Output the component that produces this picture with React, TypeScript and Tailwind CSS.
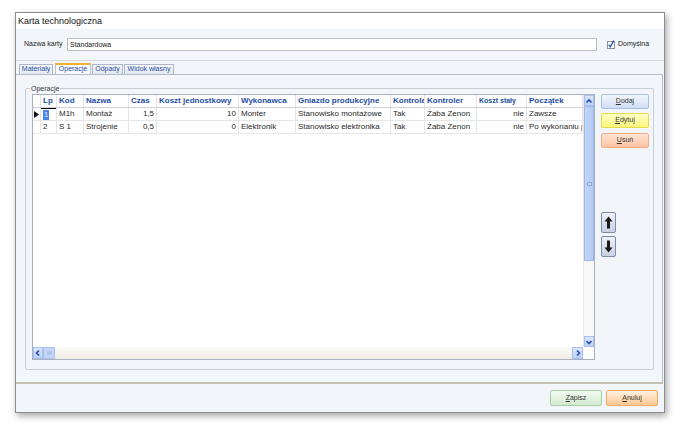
import React from "react";

const COLS = "grid grid-cols-[8px_16px_27px_45px_28px_82px_57px_95px_34px_52px_50px_56px]";

function Chevron({ dir }: { dir: "up" | "down" | "left" | "right" }) {
  const pts: Record<string, string> = {
    up: "1.5,5.5 4,3 6.5,5.5",
    down: "1.5,3 4,5.5 6.5,3",
    left: "5,1.5 2.5,4 5,6.5",
    right: "3,1.5 5.5,4 3,6.5",
  };
  return (
    <svg width="8" height="8" viewBox="0 0 8 8">
      <polyline points={pts[dir]} fill="none" stroke="#1f4fb3" strokeWidth="1.6" />
    </svg>
  );
}

function Arrow({ down }: { down?: boolean }) {
  return (
    <svg width="9" height="13" viewBox="0 0 9 13" className={down ? "rotate-180" : ""}>
      <polygon points="4.5,0.5 8.5,5.5 6,5.5 6,12.5 3,12.5 3,5.5 0.5,5.5" fill="#1a1a1a" />
    </svg>
  );
}

type Row = string[];
const rows: Row[] = [
  ["1", "M1h", "Montaż", "1,5", "10", "Monter", "Stanowisko montażowe", "Tak", "Żaba Zenon", "nie", "Zawsze"],
  ["2", "S 1", "Strojenie", "0,5", "0", "Elektronik", "Stanowisko elektronika", "Tak", "Żaba Zenon", "nie", "Po wykonaniu poprzedniej"],
];

const headers = ["Lp", "Kod", "Nazwa", "Czas", "Koszt jednostkowy", "Wykonawca", "Gniazdo produkcyjne", "Kontrola", "Kontroler", "Koszt stały", "Początek"];
const rightAligned = [3, 4, 9];

export default function App() {
  return (
    <div className="w-[680px] h-[431px] bg-white pt-[12px] pl-[15px] font-['Liberation_Sans',Arial,sans-serif] text-[#222]">
      <div className="w-[650px] h-[401px] border border-[#8c8c8c] bg-[#f2f5fa] flex flex-col shadow-[2px_3px_7px_rgba(0,0,0,0.35)]">
        {/* title */}
        <div className="h-[16px] bg-white text-[9px] leading-[16px] pl-[2px] text-[#111]">Karta technologiczna</div>

        {/* name row */}
        <div className="h-[32px] flex items-center pl-[8px] border-b border-[#d3d7de]">
          <div className="w-[43px] text-[7px] whitespace-nowrap">Nazwa karty</div>
          <div className="w-[530px] h-[13px] bg-white border border-[#b9bdc4] text-[7px] leading-[11px] pl-[2px]">Standardowa</div>
          <div className="ml-[10px] flex items-center gap-[3px]">
            <svg width="8" height="9" viewBox="0 0 8 9">
              <rect x="0.5" y="1.5" width="7" height="7" fill="#fff" stroke="#8e8f94" />
              <polyline points="1.8,4.6 3.3,6.8 6.8,0.6" fill="none" stroke="#2b4fae" strokeWidth="1.3" />
            </svg>
            <span className="text-[7px]">Domyślna</span>
          </div>
        </div>

        {/* tabs */}
        <div className="h-[13px] flex items-end pl-[3px] gap-[1px] text-[7px] text-[#2a4f9f]">
          <div className="w-[34px] h-[10px] border border-b-0 border-[#aeb7c4] bg-gradient-to-b from-[#f6f8fb] to-[#e2e7ef] flex items-center justify-center mr-[1px]">Materiały</div>
          <div className="w-[36px] h-[11px] border border-b-0 border-[#b9c2ce] border-t-2 border-t-[#f0b030] bg-[#f8fafd] flex items-center justify-center">Operacje</div>
          <div className="w-[31px] h-[10px] border border-b-0 border-[#aeb7c4] bg-gradient-to-b from-[#f6f8fb] to-[#e2e7ef] flex items-center justify-center">Odpady</div>
          <div className="w-[50px] h-[10px] border border-b-0 border-[#aeb7c4] bg-gradient-to-b from-[#f6f8fb] to-[#e2e7ef] flex items-center justify-center">Widok własny</div>
        </div>

        {/* tab page */}
        <div className="h-[310px] mr-[1px] border-t border-r border-[#b5bdc9] border-b-2 border-b-[#c4c0b4] flex flex-col">
          <div className="relative mt-[13px] ml-[9px] mr-[8px] h-[282px] border border-[#c8ced8] rounded-[2px] pt-[5px] pl-[6px] pr-[3px] flex gap-[6px]">
            <span className="absolute left-[4px] top-[-5px] px-[1px] bg-[#f2f5fa] text-[7px] leading-[9px] text-[#333]">Operacje</span>

            {/* grid */}
            <div className="w-[563px] h-[266px] border border-[#aab1bc] bg-white flex flex-col">
              <div className="flex-1 flex min-h-0">
                <div className="flex-1 overflow-hidden">
                  <div className={`${COLS} h-[13px] border-b border-[#cfd3d9] text-[8px] font-bold text-[#1f4e9e] leading-[12px]`}>
                    <div className="border-r border-[#e2e4e8]" />
                    {headers.map((h, i) => (
                      <div
                        key={h}
                        className={`border-r border-[#e2e4e8] px-[2px] overflow-hidden whitespace-nowrap ${i === 9 ? "text-[7px] text-[#244f96]" : ""}`}
                      >
                        {h}
                      </div>
                    ))}
                  </div>
                  {rows.map((r, ri) => (
                    <div key={ri} className={`${COLS} h-[13px] border-b border-[#e4e6ea] text-[8px] leading-[12px] text-[#2a2a2a]`}>
                      <div className="border-r border-[#e2e4e8] flex items-center justify-center">
                        {ri === 0 && (
                          <svg width="5" height="7" viewBox="0 0 5 7">
                            <polygon points="0,0 5,3.5 0,7" fill="#111" />
                          </svg>
                        )}
                      </div>
                      {r.map((c, ci) => (
                        <div
                          key={ci}
                          className={`border-r border-[#e2e4e8] px-[2px] overflow-hidden whitespace-nowrap ${rightAligned.includes(ci) ? "text-right" : ""} ${ri === 0 && ci === 0 ? "shadow-[inset_0_1px_0_#000] pt-[1px]" : ""}`}
                        >
                          {ri === 0 && ci === 0 ? (
                            <span className="inline-block bg-[#4b86e6] text-[#dfe9ff] leading-[10px] px-[1px]">{c}</span>
                          ) : (
                            c
                          )}
                        </div>
                      ))}
                    </div>
                  ))}
                </div>
                {/* vertical scrollbar */}
                <div className="w-[11px] flex flex-col border-l border-[#e6e8ec]">
                  <div className="h-[11px] bg-gradient-to-b from-[#dbe6fb] to-[#bcd0f6] border border-[#a9c0ee] flex items-center justify-center">
                    <Chevron dir="up" />
                  </div>
                  <div className="h-[155px] bg-gradient-to-r from-[#c3d5f8] to-[#b5cbf5] border border-[#9fb8ec] flex items-center justify-center">
                    <div className="w-[5px] h-[4px] border border-[#8fa9e3] bg-[#c9d9fa]" />
                  </div>
                  <div className="flex-1 bg-[#f8f8f6]" />
                  <div className="h-[11px] bg-gradient-to-b from-[#dbe6fb] to-[#bcd0f6] border border-[#a9c0ee] flex items-center justify-center">
                    <Chevron dir="down" />
                  </div>
                </div>
              </div>
              {/* horizontal scrollbar */}
              <div className="h-[12px] flex">
                <div className="flex-1 flex bg-gradient-to-b from-[#fbfaf6] to-[#efece4]">
                  <div className="w-[10px] bg-gradient-to-b from-[#dbe6fb] to-[#bcd0f6] border border-[#a9c0ee] flex items-center justify-center">
                    <Chevron dir="left" />
                  </div>
                  <div className="w-[12px] bg-[#c3d5f8] border border-[#a9c0ee] flex items-center justify-center">
                    <div className="w-[5px] h-[4px] bg-[#aec5f2]" />
                  </div>
                  <div className="flex-1" />
                  <div className="w-[11px] bg-gradient-to-b from-[#dbe6fb] to-[#bcd0f6] border border-[#a9c0ee] flex items-center justify-center">
                    <Chevron dir="right" />
                  </div>
                </div>
                <div className="w-[11px] bg-white" />
              </div>
            </div>

            {/* buttons */}
            <div className="w-[48px] flex flex-col text-[7px] text-[#333]">
              <div className="h-[15px] rounded-[2px] border border-[#a8bfe2] bg-gradient-to-b from-[#f3f7fd] to-[#cfdcf2] flex items-center justify-center">
                <span><u>D</u>odaj</span>
              </div>
              <div className="mt-[4px] h-[15px] rounded-[2px] border border-[#e6dc4a] bg-gradient-to-b from-[#ffffc4] to-[#fbf77a] flex items-center justify-center">
                <span><u>E</u>dytuj</span>
              </div>
              <div className="mt-[5px] h-[15px] rounded-[2px] border border-[#f3ad86] bg-gradient-to-b from-[#ffe4d4] to-[#fcc3a4] flex items-center justify-center">
                <span><u>U</u>suń</span>
              </div>
              <div className="mt-[64px] w-[15px] h-[21px] rounded-[2px] border border-[#7d8ba3] bg-gradient-to-b from-[#eef2f8] to-[#c8d2e2] flex items-center justify-center">
                <Arrow />
              </div>
              <div className="mt-[3px] w-[15px] h-[21px] rounded-[2px] border border-[#7d8ba3] bg-gradient-to-b from-[#eef2f8] to-[#c8d2e2] flex items-center justify-center">
                <Arrow down />
              </div>
            </div>
          </div>
        </div>

        {/* footer */}
        <div className="flex-1 flex items-center justify-end gap-[4px] pr-[6px] text-[7px] text-[#333]">
          <div className="w-[52px] h-[16px] rounded-[2px] border border-[#a5d0a0] bg-gradient-to-b from-[#f3faf2] to-[#d3ead0] flex items-center justify-center">
            <span><u>Z</u>apisz</span>
          </div>
          <div className="w-[52px] h-[16px] rounded-[2px] border border-[#f6ab62] bg-gradient-to-b from-[#fff0e0] to-[#fcc894] flex items-center justify-center">
            <span><u>A</u>nuluj</span>
          </div>
        </div>
      </div>
    </div>
  );
}
